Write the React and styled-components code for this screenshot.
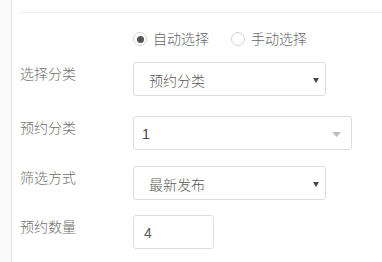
import styled, { createGlobalStyle } from "styled-components";

const Global = createGlobalStyle`
  html, body {
    margin: 0;
    padding: 0;
    background: #fff;
  }
  body {
    font-family: "Liberation Sans", "Noto Sans CJK SC", sans-serif;
    font-size: 14px;
    font-weight: 300;
    color: #555;
  }
`;

const Page = styled.div`
  display: flex;
  min-height: 262px;
`;

const Side = styled.aside`
  width: 11px;
  flex-shrink: 0;
  background: #fafafa;
  border-right: 1px solid #e6e6e6;
`;

const Main = styled.main`
  flex: 1;
  padding-left: 8px;
`;

const Head = styled.div`
  height: 12px;
  border-bottom: 1px solid #eee;
`;

const Form = styled.form`
  padding-top: 16px;
`;

const RadioRow = styled.div`
  display: flex;
  align-items: center;
  gap: 22px;
  height: 20px;
  margin: 0 0 13px 113px;
`;

const RadioItem = styled.label`
  display: inline-flex;
  align-items: center;
  gap: 6px;
  color: #666;
  line-height: 20px;
`;

const Circle = styled.span`
  width: 14px;
  height: 14px;
  box-sizing: border-box;
  border: 1px solid #d4d4d4;
  border-radius: 50%;
  display: inline-flex;
  align-items: center;
  justify-content: center;

  &::after {
    content: "";
    width: 7px;
    height: 7px;
    border-radius: 50%;
    background: ${({ $on }) => ($on ? "#555" : "transparent")};
  }
`;

const Row = styled.div`
  display: flex;
  align-items: flex-start;
  margin-bottom: ${({ $gap }) => $gap}px;
`;

const Label = styled.div`
  width: 113px;
  flex-shrink: 0;
  padding-top: 2px;
  line-height: 20px;
  color: #6e6e6e;
`;

const Field = styled.div`
  box-sizing: border-box;
  width: ${({ $w }) => $w}px;
  height: 34px;
  border: 1px solid #ddd;
  border-radius: 3px;
  background: #fff;
  display: flex;
  align-items: center;
  justify-content: space-between;
  padding: 2px ${({ $pr }) => $pr}px 0 ${({ $pl }) => $pl}px;
  color: ${({ $dark }) => ($dark ? "#444" : "#5a5a5a")};
  font-size: 14px;
`;

const Caret = ({ wide }) =>
  wide ? (
    <svg width="9" height="5" viewBox="0 0 9 5">
      <path d="M0 0h9L4.5 5z" fill="#bdbdbd" />
    </svg>
  ) : (
    <svg width="6" height="5" viewBox="0 0 6 5">
      <path d="M0 0h6L3 5z" fill="#444" />
    </svg>
  );

export default function App() {
  return (
    <Page>
      <Global />
      <Side />
      <Main>
        <Head />
        <Form>
          <RadioRow>
            <RadioItem>
              <Circle $on />
              自动选择
            </RadioItem>
            <RadioItem>
              <Circle />
              手动选择
            </RadioItem>
          </RadioRow>

          <Row $gap={20}>
            <Label>选择分类</Label>
            <Field $w={193} $pl={15} $pr={6}>
              <span>预约分类</span>
              <Caret />
            </Field>
          </Row>

          <Row $gap={16}>
            <Label>预约分类</Label>
            <Field $w={219} $pl={8} $pr={10} $dark>
              <span>1</span>
              <Caret wide />
            </Field>
          </Row>

          <Row $gap={15}>
            <Label>筛选方式</Label>
            <Field $w={193} $pl={15} $pr={6}>
              <span>最新发布</span>
              <Caret />
            </Field>
          </Row>

          <Row $gap={0}>
            <Label>预约数量</Label>
            <Field $w={81} $pl={10} $pr={6}>
              <span>4</span>
            </Field>
          </Row>
        </Form>
      </Main>
    </Page>
  );
}
